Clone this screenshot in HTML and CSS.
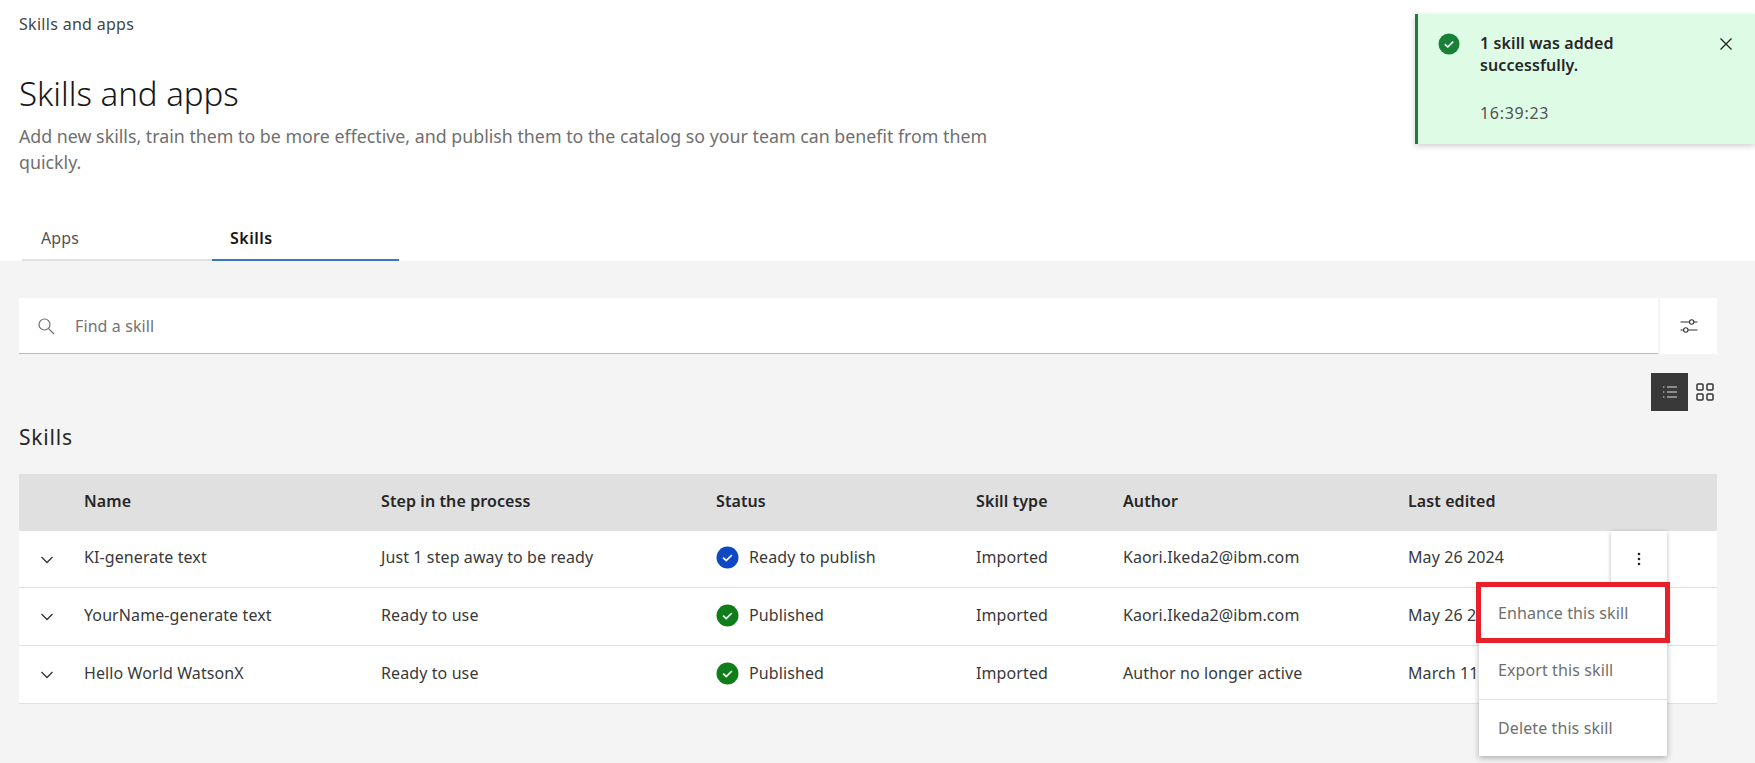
FILE: index.html
```html
<!DOCTYPE html>
<html lang="en">
<head>
<meta charset="UTF-8" />
<meta name="viewport" content="width=device-width, initial-scale=1" />
<title>Skills and apps</title>
<link rel="stylesheet" href="styles.css">
</head>
<body>

<header class="top">
  <div class="crumb">Skills and apps</div>
  <h1>Skills and apps</h1>
  <p class="intro">Add new skills, train them to be more effective, and publish them to the catalog so your team can benefit from them quickly.</p>
  <div class="tabs">
    <div class="tab">Apps</div>
    <div class="tab active">Skills</div>
  </div>
</header>

<main class="content">
  <div class="search-row">
    <div class="search">
      <svg class="search-icon" width="18" height="18" viewBox="0 0 18 18" fill="none" stroke="#6f6f6f" stroke-width="1.2"><circle cx="7.5" cy="7.5" r="5.5"/><path d="M11.6 11.6L17 17"/></svg>
      <span>Find a skill</span>
    </div>
    <button class="filter-btn">
      <svg width="18" height="16" viewBox="0 0 18 16" fill="none" stroke="#333" stroke-width="1.1"><path d="M0.5 4H9.5M14 4H17.5M0.5 12H3.5M8 12H17.5"/><circle cx="11.7" cy="4" r="2.2"/><circle cx="5.8" cy="12" r="2.2"/></svg>
    </button>
  </div>

  <div class="view-row">
    <button class="view-btn on">
      <svg width="16" height="14" viewBox="0 0 16 14" fill="none" stroke="#e0e0e0" stroke-width="1.1"><path d="M5 2H15M5 7H15M5 12H15M1 2H2.4M1 7H2.4M1 12H2.4"/></svg>
    </button>
    <button class="view-btn grid">
      <svg width="18" height="18" viewBox="0 0 18 18" fill="none" stroke="#333" stroke-width="1.5"><rect x="1" y="1" width="6" height="6" rx="1"/><rect x="11" y="1" width="6" height="6" rx="1"/><rect x="1" y="11" width="6" height="6" rx="1"/><rect x="11" y="11" width="6" height="6" rx="1"/></svg>
    </button>
  </div>

  <h2>Skills</h2>

  <div class="table-wrap">
    <table>
      <colgroup>
        <col class="c-toggle"><col class="c-name"><col class="c-step"><col class="c-status"><col class="c-type"><col class="c-author"><col class="c-edited">
      </colgroup>
      <thead>
        <tr><th></th><th>Name</th><th>Step in the process</th><th>Status</th><th>Skill type</th><th>Author</th><th>Last edited</th></tr>
      </thead>
      <tbody>
        <tr>
          <td class="toggle"><svg width="14" height="8" viewBox="0 0 14 8" fill="none" stroke="#333" stroke-width="1.3"><path d="M1.5 1L7 6.5L12.5 1"/></svg></td>
          <td>KI-generate text</td>
          <td>Just 1 step away to be ready</td>
          <td><span class="status"><svg width="23" height="23" viewBox="0 0 22 22"><circle cx="11" cy="11" r="10.5" fill="#0f48c4"/><path d="M6.8 11.2L9.8 14L15.2 8.6" fill="none" stroke="#fff" stroke-width="1.6"/></svg>Ready to publish</span></td>
          <td>Imported</td>
          <td>Kaori.Ikeda2@ibm.com</td>
          <td>May 26 2024</td>
        </tr>
        <tr>
          <td class="toggle"><svg width="14" height="8" viewBox="0 0 14 8" fill="none" stroke="#333" stroke-width="1.3"><path d="M1.5 1L7 6.5L12.5 1"/></svg></td>
          <td>YourName-generate text</td>
          <td>Ready to use</td>
          <td><span class="status"><svg width="23" height="23" viewBox="0 0 22 22"><circle cx="11" cy="11" r="10.5" fill="#0e7d1a"/><path d="M6.8 11.2L9.8 14L15.2 8.6" fill="none" stroke="#fff" stroke-width="1.6"/></svg>Published</span></td>
          <td>Imported</td>
          <td>Kaori.Ikeda2@ibm.com</td>
          <td>May 26 2024</td>
        </tr>
        <tr>
          <td class="toggle"><svg width="14" height="8" viewBox="0 0 14 8" fill="none" stroke="#333" stroke-width="1.3"><path d="M1.5 1L7 6.5L12.5 1"/></svg></td>
          <td>Hello World WatsonX</td>
          <td>Ready to use</td>
          <td><span class="status"><svg width="23" height="23" viewBox="0 0 22 22"><circle cx="11" cy="11" r="10.5" fill="#0e7d1a"/><path d="M6.8 11.2L9.8 14L15.2 8.6" fill="none" stroke="#fff" stroke-width="1.6"/></svg>Published</span></td>
          <td>Imported</td>
          <td>Author no longer active</td>
          <td>March 11 2024</td>
        </tr>
      </tbody>
    </table>

    <button class="overflow-btn">
      <svg width="4" height="14" viewBox="0 0 4 14" fill="#222"><circle cx="2" cy="2" r="1.3"/><circle cx="2" cy="7" r="1.3"/><circle cx="2" cy="12" r="1.3"/></svg>
    </button>
    <ul class="menu">
      <li class="highlighted">Enhance this skill</li>
      <li class="export">Export this skill</li>
      <li>Delete this skill</li>
    </ul>
  </div>
</main>

<div class="toast">
  <svg class="toast-icon" width="22" height="22" viewBox="0 0 22 22"><circle cx="11" cy="11" r="10.5" fill="#198038"/><path d="M6.8 11.2L9.8 14L15.2 8.6" fill="none" stroke="#fff" stroke-width="1.6"/></svg>
  <div class="toast-text">
    <div class="toast-title">1 skill was added successfully.</div>
    <div class="toast-time">16:39:23</div>
  </div>
  <svg class="toast-close" width="14" height="14" viewBox="0 0 14 14" fill="none" stroke="#222" stroke-width="1.3"><path d="M1.5 1.5L12.5 12.5M12.5 1.5L1.5 12.5"/></svg>
</div>

</body>
</html>
```

FILE: styles.css
```css
body {
  font-family: "Noto Sans", Arial, sans-serif;
  font-size: 16px;
  letter-spacing: .1px;
  background: #f4f4f4;
  color: #393939;
  margin: 0;
  height: 763px;
  overflow: hidden;
}
button {
  border: none;
  padding: 0;
  display: flex;
  align-items: center;
  justify-content: center;
}

/* top part */
.top {
  background: #fff;
  height: 261px;
  padding: 13px 0 0 19px;
  box-sizing: border-box;
}
.crumb {
  line-height: 22px;
  letter-spacing: .3px;
  color: #444;
}
h1 {
  font-size: 33px;
  font-weight: 300;
  letter-spacing: 0;
  line-height: 42px;
  margin: 38px 0 0;
  color: #161616;
}
.intro {
  font-size: 17.8px;
  letter-spacing: 0;
  line-height: 26px;
  width: 990px;
  margin: 8px 0 0;
  color: #6f6f6f;
}
.tabs {
  display: flex;
  margin: 42px 0 0 3px;
}
.tab {
  width: 190px;
  height: 44px;
  box-sizing: border-box;
  padding: 10px 0 0 19px;
  border-bottom: 2px solid #e0e0e0;
  color: #525252;
}
.tab.active {
  width: 187px;
  padding-left: 18px;
  font-weight: 600;
  letter-spacing: .5px;
  color: #161616;
  border-bottom-color: #3a74c4;
}

/* search */
.content {
  padding: 37px 38px 0 19px;
  position: relative;
}
.search-row {
  display: flex;
  gap: 2px;
}
.search {
  flex: 1;
  height: 56px;
  background: #fff;
  border-bottom: 1px solid #b8b8b8;
  box-sizing: border-box;
  display: flex;
  align-items: center;
  padding-left: 18px;
  color: #737373;
}
.search-icon {
  margin-right: 20px;
}
.filter-btn {
  width: 57px;
  height: 56px;
  background: #fff;
}
.view-row {
  display: flex;
  justify-content: flex-end;
  margin: 19px -5px 0 0;
}
.view-btn {
  width: 37px;
  height: 38px;
  background: transparent;
}
.view-btn.on {
  background: #393939;
}
.view-btn.grid {
  width: 34px;
}
h2 {
  font-size: 21px;
  font-weight: 400;
  letter-spacing: .8px;
  line-height: 28px;
  margin: 12px 0 23px;
  color: #262626;
}

/* table */
.table-wrap {
  position: relative;
}
table {
  width: 100%;
  table-layout: fixed;
  border-collapse: collapse;
  background: #fff;
}
.c-toggle { width: 65px; }
.c-name { width: 297px; }
.c-step { width: 335px; }
.c-status { width: 260px; }
.c-type { width: 147px; }
.c-author { width: 285px; }
.c-edited { width: 309px; }
th {
  background: #e0e0e0;
  height: 57px;
  padding: 0 0 4px;
  box-sizing: border-box;
  text-align: left;
  font-weight: 600;
  color: #262626;
}
td {
  height: 58px;
  padding: 0 0 2px;
  border-bottom: 1px solid #e0e0e0;
  box-sizing: border-box;
  white-space: nowrap;
}
tbody tr:first-child td {
  height: 56px;
  padding-bottom: 3px;
}
td.toggle,
tbody tr:first-child td.toggle {
  padding: 0 0 2px 21px;
}
.status {
  display: flex;
  align-items: center;
  gap: 10px;
}
.overflow-btn {
  position: absolute;
  top: 57px;
  left: 1592px;
  width: 56px;
  height: 56px;
  background: #fff;
  box-shadow: 0 1px 4px rgba(0,0,0,.3);
}
.menu {
  position: absolute;
  top: 111px;
  left: 1460px;
  width: 188px;
  margin: 0;
  padding: 0;
  list-style: none;
  background: #fff;
  box-shadow: 0 2px 6px rgba(0,0,0,.3);
  color: #6f6f6f;
}
.menu li {
  height: 56px;
  box-sizing: border-box;
  padding: 0 0 0 19px;
  line-height: 56px;
}
.menu li.highlighted {
  height: 55px;
  padding-top: 1px;
  line-height: 55px;
  outline: 5px solid #e8202c;
  outline-offset: -2px;
  position: relative;
}
.menu li.export {
  height: 60px;
  line-height: 60px;
  border-bottom: 1px solid #e0e0e0;
}

/* toast */
.toast {
  position: absolute;
  top: 14px;
  left: 1415px;
  width: 340px;
  height: 130px;
  box-sizing: border-box;
  background: #defbe6;
  border-left: 3px solid #198038;
  box-shadow: 0 2px 6px rgba(0,0,0,.2);
  display: flex;
  padding: 19px 0 0 20px;
  color: #262626;
}
.toast-icon {
  flex-shrink: 0;
}
.toast-text {
  margin-left: 20px;
  width: 190px;
  margin-top: -1px;
}
.toast-title {
  font-weight: 600;
  line-height: 22px;
}
.toast-time {
  margin-top: 26px;
  line-height: 22px;
  letter-spacing: .7px;
  color: #525252;
}
.toast-close {
  margin: 4px 0 0 49px;
}
```
